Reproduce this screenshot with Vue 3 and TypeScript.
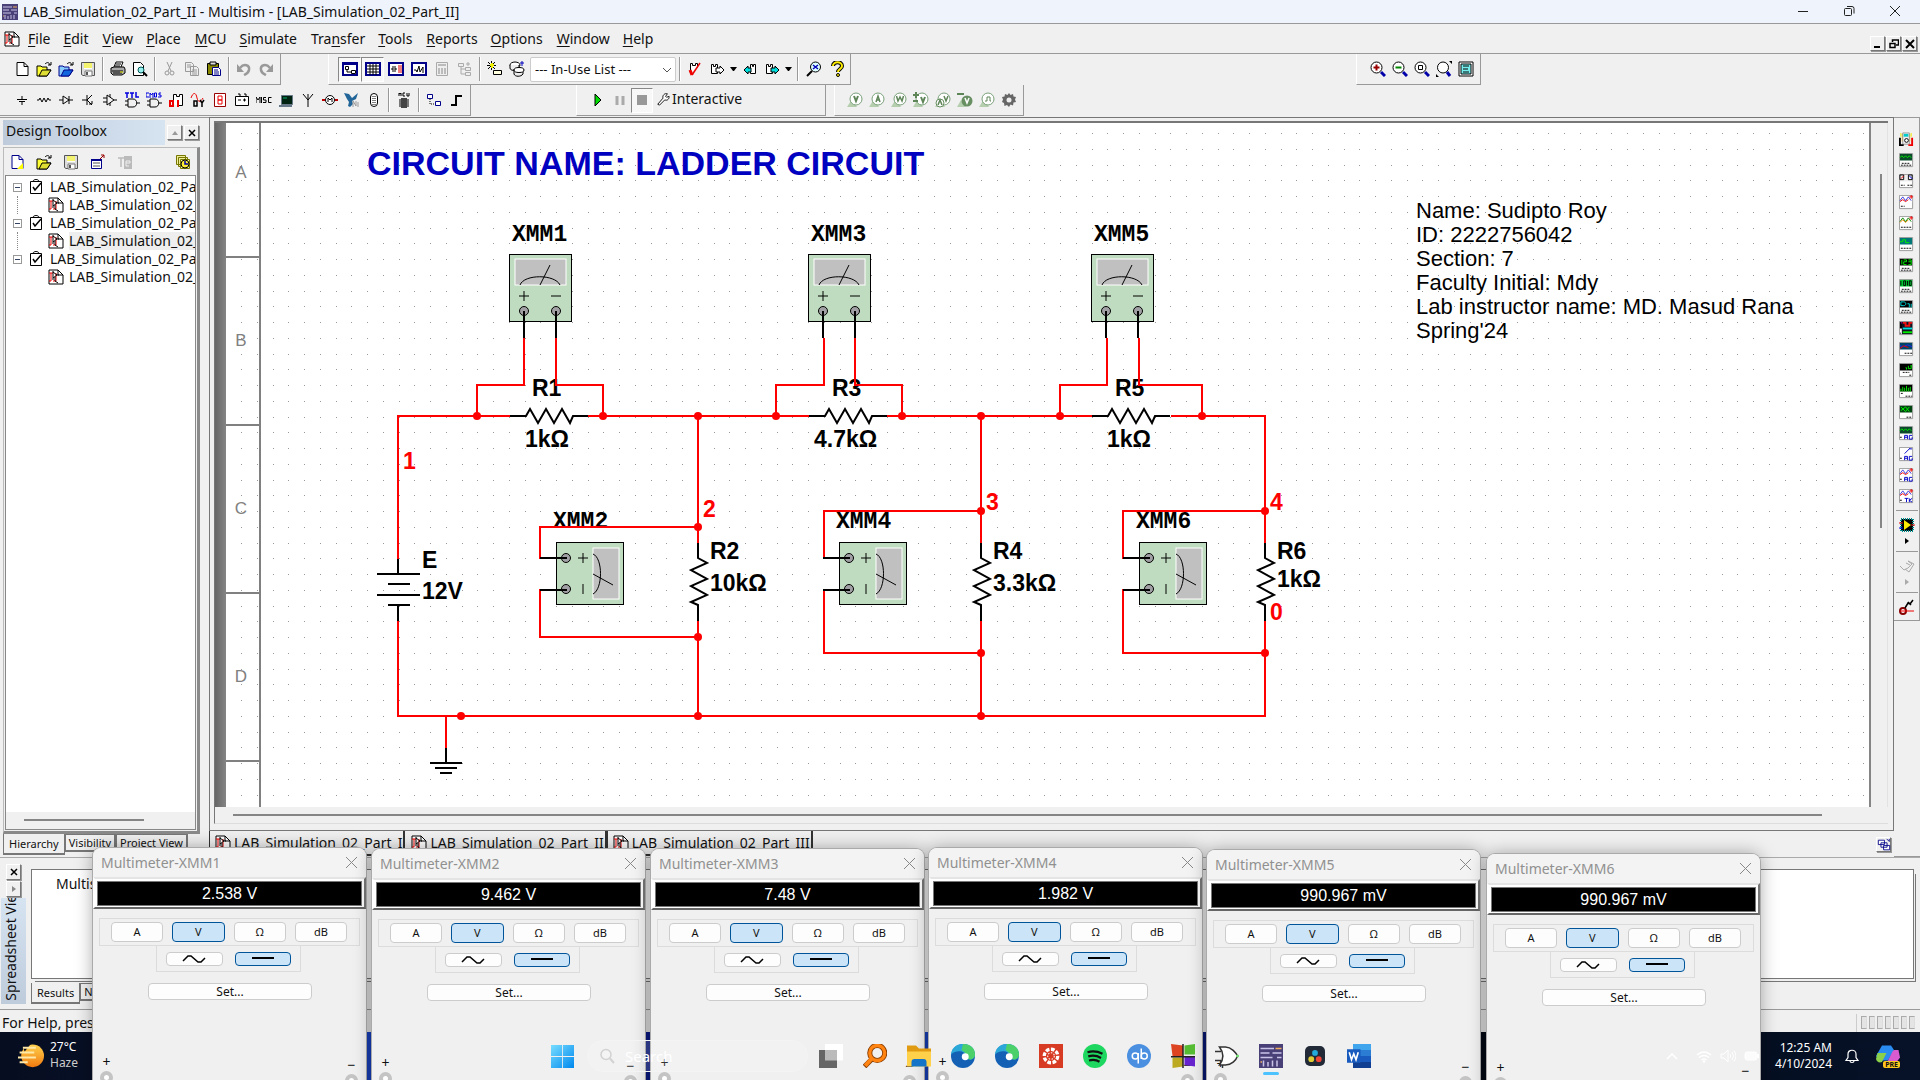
<script setup lang="ts">
import { h, ref } from 'vue'

const icons: Record<string, string> = {
  app: '<rect width="16" height="16" fill="#4a4078"/><path d="M1 3h9M1 6h6M9 6h6M1 9h8M3 15v-4M6 15v-3M9 15v-4M12 15v-4M12 9h3" stroke="#c9c4e6" fill="none"/><path d="M11 3h4M1 12h1" stroke="#f0b060"/>',
  doc: '<path d="M1 1h9l5 5v9H1z" fill="#fff" stroke="#000"/><path d="M10 1v5h5" fill="none" stroke="#000"/><path d="M1 4h4M3 4v8h-2M5 12h3v-8" stroke="#e00" fill="none"/><path d="M5 2v9M5 3l4 3-4 3M9 6h2M7 8v4l3 2" stroke="#000" fill="none"/>',
  page: '<path d="M3 1.500h7l4 4v9H3z" fill="#fff" stroke="#000"/><path d="M10 1.500v4h4" fill="none" stroke="#000"/>',
  newpage: '<path d="M3 1.500h7l4 4v9H3z" fill="#fff" stroke="#008"/><path d="M10 1.500v4h4" fill="none" stroke="#008"/><path d="M14 9v6h-6z" fill="#ff0"/>',
  open: '<path d="M1 5h4l1 1h5v3h4l-4 6H1z" fill="#ff3" stroke="#000"/><path d="M3 15l3-6h9l-4 6z" fill="#dd3" stroke="#000"/><path d="M9 3c2-2 4-2 5 1M15 1v3h-3" fill="none" stroke="#000"/>',
  openblue: '<path d="M1 5h4l1 1h5v3h4l-4 6H1z" fill="#8cf" stroke="#008"/><path d="M3 15l3-6h9l-4 6z" fill="#16d" stroke="#008"/><path d="M9 3c2-2 4-2 5 1M15 1v3h-3" fill="none" stroke="#000"/>',
  save: '<path d="M1.500 1.500h13v13H3l-1.500-1z" fill="#ddd" stroke="#555"/><path d="M4 2h8v6H4z" fill="#fff"/><path d="M4 2h8v5H4z" fill="#ee3" opacity=".7"/><path d="M5 10h7v5H5z" fill="#fff" stroke="#777"/><path d="M6 11h2v3H6z" fill="#555"/>',
  print: '<path d="M4 6l2-5h7l-2 5" fill="#fff" stroke="#000"/><path d="M6 3h5M5 5h5" stroke="#000"/><path d="M1 7l3-1h10l1 2v4l-3 2H3l-2-2z" fill="#aaa" stroke="#000"/><path d="M2 10h11M3 12h9" stroke="#000"/><path d="M10 11h3" stroke="#ee0"/>',
  preview: '<path d="M1.500 1.500h7l3 3v10h-10z" fill="#fff" stroke="#000"/><circle cx="9" cy="9" r="3" fill="#9ee" stroke="#055"/><path d="M11 11l4 4" stroke="#000" stroke-width="2"/>',
  cut: '<path d="M5 1l4 9M10 1L6 10" stroke="#999" fill="none"/><circle cx="5" cy="12" r="2" stroke="#999" fill="none"/><circle cx="10" cy="12" r="2" stroke="#999" fill="none"/>',
  copy: '<path d="M1.500 1.500h6l2 2v7h-8zM6.500 5.500h6l2 2v7h-8z" fill="#eee" stroke="#999"/><path d="M3 4h4M3 6h4M8 9h5M8 11h5M8 13h5" stroke="#999"/>',
  paste: '<path d="M1.500 2.500h11v11h-11z" fill="#880" stroke="#000"/><path d="M4 1h6v3H4z" fill="#ddd" stroke="#000"/><path d="M6.500 6.500h6l2 2v6h-8z" fill="#fff" stroke="#008"/><path d="M8 9h4M8 11h5M8 13h5" stroke="#008"/>',
  undo: '<path d="M4 7c4-5 10-3 9 2-.5 3-3 4-5 5" fill="none" stroke="#999" stroke-width="2.500"/><path d="M1 3v8h7z" fill="#999"/>',
  redo: '<path d="M12 7C8 2 2 4 3 9c.5 3 3 4 5 5" fill="none" stroke="#999" stroke-width="2.500"/><path d="M15 3v8H8z" fill="#999"/>',
  tree: '<path d="M1 2h14v12H1z" fill="#fff" stroke="#008" stroke-width="2"/><path d="M1 3h14" stroke="#008" stroke-width="2"/><path d="M3.500 5.500h3v3h-3zM9.500 9.500h4v3h-4zM5 9v2h4" fill="none" stroke="#000"/>',
  grid: '<path d="M1 2h14v12H1z" fill="#fff" stroke="#008" stroke-width="2"/><path d="M2 5h12M2 8h12M2 11h12M5 3v11M8 3v11M11 3v11" stroke="#000"/>',
  spice: '<path d="M1 2h14v12H1z" fill="#fff" stroke="#008" stroke-width="2"/><path d="M3 8h2M5 5v6M7 5v6M7 8h2" stroke="#000"/><path d="M10 5h4M10 7h4M10 9h4M10 11h4" stroke="#d00"/>',
  graph: '<path d="M1 2h14v12H1z" fill="#fff" stroke="#008" stroke-width="2"/><path d="M3 9h2l1 2 2-6 1 6 3-5v6" fill="none" stroke="#000"/>',
  calc: '<path d="M2.500 1.500h11v13h-11z" fill="#eee" stroke="#aaa"/><path d="M4 4h8M4 8h2M7 8h2M10 8h2M4 10h2M7 10h2M10 10h2M4 12h2M7 12h2M10 12h2" stroke="#aaa" stroke-width="1.500"/>',
  hier: '<path d="M1.500 2.500h5v3h-5zM8.500 6.500h5v3h-5zM8.500 11.500h5v3h-5zM4 6v7h4M4 8h4M9 3h4M11 1v4" fill="#eee" stroke="#aaa"/>',
  newcomp: '<path d="M6.500 9.500h8v4h-8z" fill="#ffd" stroke="#000"/><path d="M1 1l7 7M8 1L1 8M4.500 0v9M0 4.500h9" stroke="#000"/><path d="M3 4h4M5 2v5" stroke="#ee0" stroke-width="2"/>',
  db: '<ellipse cx="6" cy="4" rx="5" ry="3" fill="#fff" stroke="#000"/><path d="M1 4v3c0 3 6 3 9 1V4M5 8v5c1 3 7 3 9 0V8" fill="#eee" stroke="#000"/><ellipse cx="10" cy="9" rx="5" ry="2.500" fill="#fff" stroke="#000"/><path d="M11 2h4M13 0v5" stroke="#00b"/>',
  erc: '<path d="M3.500 12V2.500h2v2h3v-2h2v4" fill="#fff" stroke="#000"/><path d="M3 9l2 5" stroke="#e00" stroke-width="3" fill="none"/><path d="M5 14l8-12" stroke="#e00" stroke-width="1.500"/>',
  xfer: '<path d="M2.500 12.500v-9h2v2h2v-2h2v9z" fill="#fff" stroke="#000"/><path d="M7 7h4V5l4 4-4 4v-2H7z" fill="#fff" stroke="#000"/>',
  back: '<path d="M8.500 12.500v-9h2v2h1v-2h2v9z" fill="#fff" stroke="#000"/><path d="M9 7H6V5L2 9l4 4v-2h3z" fill="#0dd" stroke="#000"/>',
  fwd: '<path d="M2.500 12.500v-9h2v2h2v-2h2v9z" fill="#fff" stroke="#000"/><path d="M7 7h4V5l4 4-4 4v-2H7z" fill="#0dd" stroke="#000"/>',
  find: '<circle cx="9.500" cy="6" r="5" fill="#dff" stroke="#000"/><path d="M6 10l-5 5" stroke="#000" stroke-width="2"/><path d="M7 4l5 4M12 4L7 8" stroke="#00b" stroke-width="1.500"/>',
  help: '<path d="M4 5c0-5 9-5 9 0 0 3-4 3-4 6" stroke="#000" stroke-width="4" fill="none"/><path d="M4 5c0-5 9-5 9 0 0 3-4 3-4 6" stroke="#fe0" stroke-width="2" fill="none"/><circle cx="9" cy="14" r="1.500" fill="#fe0" stroke="#000"/>',
  zin: '<circle cx="6.500" cy="6.500" r="5.500" fill="#fff" stroke="#000"/><path d="M3.500 6.500h6M6.500 3.500v6" stroke="#900" stroke-width="2"/><path d="M11 11l4 4" stroke="#00a" stroke-width="3"/>',
  zout: '<circle cx="6.500" cy="6.500" r="5.500" fill="#fff" stroke="#000"/><path d="M3.500 6.500h6" stroke="#080" stroke-width="2"/><path d="M11 11l4 4" stroke="#00a" stroke-width="3"/>',
  zarea: '<circle cx="6.500" cy="6.500" r="5.500" fill="#fff" stroke="#000"/><path d="M4.500 4.500h4v4h-4z" fill="none" stroke="#000"/><path d="M11 11l4 4" stroke="#00a" stroke-width="3"/>',
  zfit: '<circle cx="7" cy="6.500" r="5.500" fill="#fff" stroke="#000"/><path d="M11 11l3 4" stroke="#00a" stroke-width="3"/><path d="M13 0h3v3zM0 13v3h3z" fill="#000"/>',
  full: '<path d="M1 1h14v14H1z" fill="#fff" stroke="#000"/><path d="M3 3h10v10H3z" fill="#7ee" stroke="#000"/><path d="M5 5h6M5 8h5M5 11h6" stroke="#000"/>',
  src: '<path d="M3 7.500h10M5 9.500h6M8 4v3M8 10v3" stroke="#000"/>',
  res: '<path d="M1 8h2l1-2 2 4 2-4 2 4 2-4 1 2h2" fill="none" stroke="#000"/>',
  diode: '<path d="M1 8h4M11 8h4M5 4v8l6-4zM11 4v8" fill="none" stroke="#000"/>',
  trans: '<path d="M2 8h5M7 3v10M12 3L7 8l5 5M9 12h3v-3" fill="none" stroke="#000"/>',
  opamp: '<path d="M5 3v10l7-5zM1 6h4M1 10h4M12 8h3M8 2v3M8 11v3" fill="none" stroke="#000"/>',
  ttl: '<path d="M4 7h5c5 0 5 8 0 8H4zM1 9h3M1 13h3M13 11h3" fill="none" stroke="#000"/><path d="M1 1h4M3 1v5M6 1h4M8 1v5M12 0v5h3" stroke="#00d" stroke-width="1.500" fill="none"/>',
  cmos: '<path d="M4 7h5c5 0 5 8 0 8H4zM1 9h3M1 13h3M13 11h3" fill="none" stroke="#000"/><path d="M3 1H0v4h3M4 6V1l1.500 2L7 1v5M8.500 1h2v4h-2zM15 1h-2v2h2v2h-3" stroke="#00d" fill="none"/>',
  digi: '<path d="M5.500 12V2.500h3v2h3v-2h3v11H9" fill="#fff" stroke="#000"/><path d="M2 9h3v5H2zM10 8v7" fill="none" stroke="#e00" stroke-width="2"/>',
  mixed: '<path d="M1 6c2-6 5-6 6 0 1 4 3 5 6 0" fill="none" stroke="#e00"/><path d="M4 9h3v5H4zM10 8l2 3 2-3M12 11v4" fill="none" stroke="#000" stroke-width="1.500"/>',
  indi: '<path d="M2.500 1.500h11v13h-11z" fill="#fff" stroke="#900"/><path d="M6 4h4v4H6zM6 8h4v4H6z" fill="none" stroke="#e00"/>',
  power: '<path d="M1.500 4.500h13v9h-13z" fill="#fff" stroke="#000"/><path d="M4 2h2v2M10 2h2v2M4 8h3M9 8h3M10.500 6.500v3" fill="none" stroke="#000"/>',
  misc: '<path d="M0 11V5l2 3 2-3v6M5.500 5v6M10 5.500H7.500v2.500H10v2.500H7M15.500 5.500h-3v5h3" fill="none" stroke="#000"/>',
  adv: '<path d="M3.500 3.500h11v9h-11z" fill="#021" stroke="#678"/><path d="M1 13h13v2H1z" fill="#678"/><path d="M5 6h4" stroke="#0a6"/>',
  rf: '<path d="M8 15V8M8 8L3 2M8 8l5-6M8 8V2" fill="none" stroke="#000"/>',
  motor: '<circle cx="8" cy="8" r="4.500" fill="#fff" stroke="#000"/><path d="M6 10V6l2 2 2-2v4" fill="none" stroke="#000"/><path d="M0 8h3M13 8h3" stroke="#b00" stroke-width="2"/>',
  ni: '<path d="M0 1l5 1 3 4 6-5-2 6-4 2 1 3-3 3-2-1 1-4-2-3z" fill="#269"/><path d="M9 15V9l3 5V9M14 10v5" stroke="#999" fill="none"/>',
  conn: '<rect x="4.500" y="1.500" width="7" height="13" rx="3.500" fill="#fff" stroke="#000"/><path d="M7 4v9M9 4v9" stroke="#000" stroke-dasharray="1 1"/>',
  mcu: '<path d="M3 4V1l1 1 1-1v3M9 1H7v3h2M11 1v3h2V1" fill="none" stroke="#000"/><path d="M5 6h6v10H5z" fill="#444"/><path d="M3 8h10M3 10h10M3 12h10M3 14h10" stroke="#000" stroke-dasharray="2 6"/>',
  hb: '<path d="M1.500 2.500h5v4h-5zM9.500 9.500h5v4h-5z" fill="#fff" stroke="#008"/><path d="M4 7v5h5" fill="none" stroke="#000" stroke-dasharray="1 1"/>',
  bus: '<path d="M3 13h5V4h6" fill="none" stroke="#000" stroke-width="2"/>',
  wrench: '<path d="M2 14l6-7c-1-3 2-6 5-5l-2 3 1 1 3-1c0 4-3 5-5 4l-6 6z" fill="#fff" stroke="#000"/>',
  gear: '<path d="M8 1l1.500 2L12 2l.5 2.500L15 5l-1 2.500 1 2.500-2.500.5-.5 3-2.500-1L8 15l-2-2-2.500 1-.5-3L1 10l1-2.500L1 5l2.500-.5L4 2l2.500 1z" fill="#666"/><circle cx="8" cy="8" r="2.500" fill="#eee"/>',
  close: '<path d="M4 4l8 8M12 4l-8 8" stroke="#000" stroke-width="2"/>',
  rename: '<path d="M1.500 5.500h10v9h-10z" fill="#fff" stroke="#008"/><path d="M1 6h11" stroke="#008" stroke-width="2"/><path d="M3 9h7M3 12h7" stroke="#555"/><path d="M10 5l4-4M11 1h3v3" stroke="#900" fill="none"/>',
  tedit: '<path d="M1 4h6M4 4v9" stroke="#bbb" stroke-width="1.500"/><path d="M7 2h8v13H7z" fill="#bbb"/><path d="M9 9h4M12 12H9V7h4v2" stroke="#eee" fill="none"/>',
  recent: '<path d="M1.500 1.500h9v9h-9zM3.500 3.500h9v9h-9z" fill="#ee9" stroke="#770"/><path d="M5.500 5.500h9v9h-9z" fill="#ff9" stroke="#770"/><circle cx="10" cy="10" r="4" fill="#fe3" stroke="#000"/><path d="M10 7v3h3" stroke="#00a" fill="none" stroke-width="1.500"/>',
  check: '<path d="M2.500 2.500h11v12h-11z" fill="#fff" stroke="#000"/><path d="M5 2c1-2 5-2 6 0" stroke="#000" fill="#fff"/><path d="M5 8l2 3 6-7" stroke="#000" stroke-width="1.500" fill="none"/>',
  cascade: '<path d="M1.500 2.500h7v5h-7zM4.500 5.500h7v5h-7zM7.500 8.500h7v5h-7z" fill="#fff" stroke="#008"/><path d="M11 1l3 3M14 1v3" stroke="#008"/>',
  probeSet: '<path d="M3 2h9v8H3z" fill="#fc0"/><path d="M4 1h7v12H4z" fill="#eee" stroke="#999"/><path d="M5 2h5v3H5z" fill="#0cc"/><circle cx="8" cy="9" r="2" fill="#fff" stroke="#000"/><path d="M1 6v8h4" stroke="#000" stroke-width="2" fill="none"/><path d="M14 6v8h-4" stroke="#e00" stroke-width="2" fill="none"/><path d="M2 1v4M13 1v4" stroke="#ee0"/>',
  labview: '<path d="M2 2h12v12H2z" fill="#000" stroke="#088" stroke-dasharray="1 1" stroke-width="2"/><path d="M5 3v10l7-5z" fill="#fe0"/><path d="M0 6h4" stroke="#e00"/><path d="M0 11h4" stroke="#00e"/><path d="M12 8h4" stroke="#e00"/>',
  elvis: '<path d="M1 8l4 4 4-2 4-4-4-3 6 3-5 8-4-3M7 5l4 2" fill="none" stroke="#aaa"/>',
  current: '<circle cx="4" cy="12" r="3" fill="#fff" stroke="#800" stroke-width="2"/><path d="M1 12h14" stroke="#e00"/><path d="M6 9l3-5 2 1 3-4M9 3l3 3" stroke="#000" stroke-width="1.500" fill="none"/>',
}

function probe(inner: string) {
  return '<path d="M0 15l5-8 5 8z" fill="#b5cfae"/><circle cx="9" cy="7" r="6" fill="#fff" stroke="#79a079"/>' + inner
}
icons.p1 = probe('<path d="M7 4l2 5 2-5" fill="none" stroke="#5e8558" stroke-width="2"/>')
icons.p2 = probe('<path d="M7 10l2-6 2 6M7 8h4" fill="none" stroke="#5e8558" stroke-width="1.500"/>')
icons.p3 = probe('<path d="M5.500 4l1.500 5 2-4 2 4 1.500-5" fill="none" stroke="#5e8558" stroke-width="1.500"/>')
icons.p4 = probe('<path d="M8 5l2 5 2-5M0 3h6M3 0v6M0 9h5" fill="none" stroke="#5e8558" stroke-width="2"/>')
icons.p5 = probe('<circle cx="5" cy="11" r="4" fill="#fff" stroke="#688f62"/><path d="M3 13l2-5 2 5M9 4l2 5 2-5" fill="none" stroke="#5e8558" stroke-width="1.500"/>')
icons.p6 = '<path d="M0 15l4-7 5 7z" fill="#b5cfae"/><circle cx="10" cy="9" r="5.500" fill="#688f62"/><path d="M0 2h7" stroke="#5e8558" stroke-width="2"/><path d="M8 6l2 5 2-5" fill="none" stroke="#fff" stroke-width="1.500"/>'
icons.p7 = probe('<path d="M6 9h2V5h3v4h1" fill="none" stroke="#5e8558"/>')

function bench(screen: string, trace: string, color: string, foot: string) {
  return `<path d="M0.500 0.500h14v14h-14z" fill="#fff" stroke="#999"/><path d="M1 1h13v7H1z" fill="${screen}"/><path d="${trace}" fill="none" stroke="${color}"/><path d="${foot}" stroke="#000" stroke-dasharray="2 1" fill="none"/>`
}
const footer = 'M3 11h9M2 13h11'
const ag = 'M1 12h3'
const agText = '<path d="M6 14v-4h3v4M6 12h3M14 10h-3v4h3v-2" fill="none" stroke="#00c"/>'
const zigzag = 'M1 6l3-4 3 4 3-4 3 4'
const redWave = '<path d="M1 7l3-2 3 2 3-2M11 2h4M13 0v4" stroke="#e00" fill="none"/>'
icons.i1 = bench('#0a4a2a', 'M1 5l2-2 2 2 2-2 2 2 2-2 2 2', '#0e0', footer)
icons.i2 = bench('#eee', 'M1 1h4v5H1zM10 1h4v5h-4z', '#000', 'M2 12h4M9 12h5') + '<path d="M2 5l3-3" stroke="#e00"/><path d="M11 2l3 3" stroke="#00e"/>'
icons.i3 = bench('#fff', zigzag, '#33d', 'M2 12h4') + redWave
icons.i4 = bench('#fff', zigzag, '#080', 'M2 12h11') + '<path d="M1 7l3-3 3 3 3-3" stroke="#e80" fill="none"/><path d="M11 2h4M13 0v4" stroke="#e00"/>'
icons.i5 = bench('#077', 'M1 5h3V3h3v3h4', '#0e0', 'M2 12h11')
icons.i6 = bench('#000', 'M3 2v5M5 2h3v2H5v3h3M10 2h3v5h-3M10 4h3', '#0e0', footer)
icons.i7 = bench('#0c3', 'M2 2v5M5 2h2v5H5zM9 2v5M11 2h2v5h-2z', '#000', footer)
icons.i8 = bench('#000', 'M2 2h3c3 0 3 4 0 4H2zM9 4h2v4M13 4v4', '#0dd', footer)
icons.i9 = bench('#000', 'M2 2h4v3h4V2h4', '#e0e', 'M1 13h1') + '<path d="M3 1h11v13H3z" fill="#112"/><path d="M4 8h10" stroke="#0dd" stroke-width="2"/><path d="M4 2h3v3h4V2h3" stroke="#e11" stroke-width="2" fill="none"/><path d="M4 12h10" stroke="#0e0" stroke-width="2"/>'
icons.i10 = bench('#046', 'M1 4l4 1 4-2 5 2', '#22e', 'M6 12h8') + '<path d="M1 7l4-3 5 2" stroke="#e00" fill="none"/>'
icons.i11 = bench('#000', 'M7 5h1v2M10 3v3h3V3M12 3h2', '#0e0', 'M4 10h7M11 13h3')
icons.i12 = bench('#000', 'M2 8V5M4 8V3M6 8V4M8 8V2M10 8V4M12 8V3', '#0e0', 'M2 10h2M7 13h7')
icons.i13 = bench('#041', 'M2 2l5 5 4-5M2 6l5-4 4 5', '#0e0', 'M8 13h6')
icons.i14 = bench('#0a4a2a', 'M1 5l2-2 2 2 2-2 2 2 2-2 2 2', '#0e0', ag) + agText
icons.i15 = bench('#fff', 'M6 7l6-6M11 2h3', '#00c', ag) + agText
icons.i16 = bench('#fff', zigzag, '#33d', ag) + redWave + agText
icons.i17 = bench('#fff', zigzag, '#33d', ag) + redWave + '<path d="M6 10h4M8 10v4M11 10v4M14 10l-3 2 3 2" fill="none" stroke="#00c"/>'

Object.assign(icons, {
  start: '<defs><linearGradient id="win" x2="1" y2="1"><stop stop-color="#7df"/><stop offset="1" stop-color="#08e"/></linearGradient></defs><path d="M0 0h7.700v7.700H0zM8.300 0H16v7.700H8.300zM0 8.300h7.700V16H0zM8.300 8.300H16V16H8.300z" fill="url(#win)"/>',
  tview: '<path d="M4 0h12v11H4z" fill="#fff"/><path d="M0 4h12v12H0z" fill="#666"/><path d="M4 4h8v7H4z" fill="#bbb"/>',
  everything: '<circle cx="9.500" cy="6" r="5" fill="none" stroke="#8a3d00" stroke-width="3.400"/><path d="M6 10l-5 5" stroke="#8a3d00" stroke-width="3.400"/><circle cx="9.500" cy="6" r="5" fill="none" stroke="#ff8412" stroke-width="2.200"/><path d="M6 9.500l-4.500 5" stroke="#ff8412" stroke-width="2.600"/>',
  folder: '<path d="M0 1h6l2 2h8v5H0z" fill="#e09b12"/><path d="M0 5h16v10H0z" fill="#ffd04a"/><path d="M3 15v-3q0-2 2-2h6q2 0 2 2v3z" fill="#1374c8"/>',
  edge: '<circle cx="8" cy="8" r="8" fill="#1460b4"/><path d="M0 7C1-3 16-2 16 7c0 4-5 4-6 2 1-4-6-6-10-2z" fill="#2ba8d8"/><path d="M8 0c5 0 8 3 8 7s-5 4-6 2c1-3-2-4-3-5z" fill="#4cd06a"/><circle cx="9.500" cy="8.500" r="2.300" fill="#fff"/>',
  canvas: '<path d="M0 0h16v16H0z" fill="#d83b24"/><circle cx="8" cy="8" r="4.500" fill="none" stroke="#fff" stroke-width="2.200" stroke-dasharray="2.500 1"/><circle cx="8" cy="8" r="2.200" fill="none" stroke="#fff" stroke-width=".7" stroke-dasharray="1 1"/>',
  spotify: '<circle cx="8" cy="8" r="8" fill="#1ed760"/><path d="M3 5.500q5-1.500 10 1M3.500 8.300q4.500-1.300 8.500 1M4 11q4-1 7 .800" stroke="#111" stroke-width="1.500" fill="none"/>',
  qb: '<circle cx="8" cy="8" r="8" fill="#4b8fe0"/><circle cx="5.500" cy="8" r="2" fill="none" stroke="#fff"/><path d="M7.500 6v7M9.500 3v7" stroke="#fff"/><circle cx="11.500" cy="8" r="2" fill="none" stroke="#fff"/>',
  gems: '<path d="M0 0l8 1v7H1z" fill="#d42"/><path d="M9 1l7-1v7H9z" fill="#5b3"/><path d="M1 9h7v6l-7 1z" fill="#ba2"/><path d="M9 8h7v7l-7-1z" fill="#62c"/><path d="M8 0v16M0 8.500h16" stroke="#222"/>',
  gate: '<path d="M3 2h4c4 0 7 4 8 6-1 3-4 6-8 6H3c3-4 3-8 0-12z" fill="#fff" stroke="#333"/><path d="M0 5h4M0 11h4M5 14v2" stroke="#333"/><path d="M14 8h3" stroke="#7d7" stroke-width="1.500"/>',
  resolve: '<rect width="16" height="16" rx="4" fill="#222a38"/><circle cx="8" cy="5.500" r="2.300" fill="#2ad"/><circle cx="5" cy="10.500" r="2.300" fill="#dc3"/><circle cx="11" cy="10.500" r="2.300" fill="#e43"/>',
  word: '<path d="M4 0h12v16H4z" fill="#41a5ee"/><path d="M4 4h12v4H4z" fill="#2b7cd3"/><path d="M4 8h12v4H4z" fill="#185abd"/><path d="M4 12h12v4H4z" fill="#103f91"/><path d="M0 3.500h9v9H0z" fill="#185abd"/><path d="M1.500 5.500l1.500 5 1.500-4 1.500 4 1.500-5" stroke="#fff" fill="none" stroke-width="1.100"/>',
  haze: '<defs><linearGradient id="hz" x2="0" y2="1"><stop stop-color="#ffd24d"/><stop offset="1" stop-color="#f07a10"/></linearGradient></defs><circle cx="9" cy="8.500" r="7" fill="url(#hz)"/><path d="M3 1h5L4 6z" fill="#060d20"/><path d="M3 3.500h8M1 6.500h9M0 9.500h11M1 12.500h5" stroke="#ffe9a8" stroke-width="1.300"/>',
  copilot: '<path d="M4 1h6l2 3-4 7H2L0 8z" fill="#2a8cf0"/><path d="M1 6l-1 4q1 3 4 2l3-6z" fill="#8ad04a"/><path d="M12 4h3l1 5-3 4H7l4-8z" fill="#d95bd0"/>',
  chevron: '<path d="M3 11l5-5 5 5" fill="none" stroke="#fff" stroke-width="1.500"/>',
  wifi: '<path d="M1 7q7-6 14 0M3 9.500q5-4 10 0M5.500 12q2.500-2 5 0" fill="none" stroke="#fff" stroke-width="1.500"/><circle cx="8" cy="13.500" r="1.200" fill="#fff"/>',
  volume: '<path d="M1 6h3l4-4v12l-4-4H1z" fill="none" stroke="#fff"/><path d="M10 6q1.500 2 0 4M12 4q3 4 0 8M14 2.500q4 5.500 0 11" fill="none" stroke="#fff"/>',
  battery: '<rect x="1" y="4" width="12" height="8" rx="2" fill="#fff" fill-opacity=".8" stroke="#fff"/><path d="M14 6v4" stroke="#fff" stroke-width="2"/>',
  bell: '<path d="M2 12.500h12l-2-3V6c0-5-8-5-8 0v3.500zM6 13c0 2 4 2 4 0" fill="none" stroke="#fff" stroke-width="1.200"/>',
  search: '<circle cx="7" cy="6.500" r="5" fill="#f4f4f4" stroke="#d2d2d2" stroke-width="1.500"/><path d="M11 10.500l4 4.500" stroke="#d2d2d2" stroke-width="2"/>',
})

const Icon = (props: { name: string; size?: number }) =>
  h('svg', {
    viewBox: '0 0 16 16',
    width: props.size ?? 16,
    height: props.size ?? 16,
    'aria-hidden': 'true',
    innerHTML: icons[props.name],
  })
Icon.props = ['name', 'size']

const menus = ['_File', '_Edit', '_View', '_Place', '_MCU', '_Simulate', 'Tra_nsfer', '_Tools', '_Reports', '_Options', '_Window', '_Help'].map((m) => {
  const i = m.indexOf('_')
  return { pre: m.slice(0, i), key: m[i + 1], post: m.slice(i + 2) }
})

const fileTools = ['page', 'open', 'openblue', 'save', '|', 'print', 'preview', '|', 'cut', 'copy', 'paste', '|', 'undo', 'redo']
const viewTools = ['tree', 'grid', 'spice', 'graph', 'calc', 'hier']
const zoomTools = ['zin', 'zout', 'zarea', 'zfit', 'full']
const partTools = ['src', 'res', 'diode', 'trans', 'opamp', 'ttl', 'cmos', 'digi', 'mixed', 'indi', 'power', 'misc', 'adv', 'rf', 'motor', 'ni', 'conn', '|', 'mcu', '|', 'hb', 'bus']
const probeTools = ['p1', 'p2', 'p3', 'p4', 'p5', 'p6', 'p7', 'gear']
const instruments = ['probeSet', ...Array.from({ length: 17 }, (_, i) => `i${i + 1}`)]
const inUse = ref('list')

const designs = ['I', 'II', 'III']
const rulerRows = ['A', 'B', 'C', 'D']

/* Grid dots across the sheet, counted from its top left corner. */
const pitch = 15.75
let dots = ''
for (let r = 0; r < 60; r++) {
  for (let c = 0; c < 140; c++) {
    dots += `M${Math.round(15 + c * pitch)} ${Math.round(10 + r * pitch)}h1v1h-1z`
  }
}

const wires = [
  'M398 559V416H510M588 416H809M887 416H1092M1171 416H1265V543',
  'M398 621V716H1265V621',
  'M524 338V385H477V416M556 338V385H603V416',
  'M824 338V385H776V416M855 338V385H902V416',
  'M1107 338V385H1060V416M1139 338V385H1202V416',
  'M698 416V543M698 621V716M981 416V543M981 621V716',
  'M698 527H540V559M540 589V637H698',
  'M981 511H824V559M824 589V653H981',
  'M1265 511H1123V559M1123 589V653H1265',
  'M446 716V748',
].join('')
const junctions = [
  [477, 416], [603, 416], [698, 416], [776, 416], [902, 416], [981, 416], [1060, 416], [1202, 416],
  [698, 527], [698, 637], [981, 511], [981, 653], [1265, 511], [1265, 653], [461, 716], [698, 716], [981, 716],
]
const horizontalResistors = [510, 809, 1092]
const verticalResistors = [698, 981, 1265]
const topMeters = [
  { x: 509, name: 'XMM1' },
  { x: 808, name: 'XMM3' },
  { x: 1091, name: 'XMM5' },
]
const sideMeters = [
  { x: 556, name: 'XMM2' },
  { x: 839, name: 'XMM4' },
  { x: 1139, name: 'XMM6' },
]
const labels = [
  { x: 532, y: 396, t: 'R1' }, { x: 525, y: 447, t: '1kΩ' },
  { x: 832, y: 396, t: 'R3' }, { x: 814, y: 447, t: '4.7kΩ' },
  { x: 1115, y: 396, t: 'R5' }, { x: 1107, y: 447, t: '1kΩ' },
  { x: 710, y: 559, t: 'R2' }, { x: 710, y: 591, t: '10kΩ' },
  { x: 993, y: 559, t: 'R4' }, { x: 993, y: 591, t: '3.3kΩ' },
  { x: 1277, y: 559, t: 'R6' }, { x: 1277, y: 587, t: '1kΩ' },
  { x: 422, y: 568, t: 'E' }, { x: 422, y: 599, t: '12V' },
]
const nets = [
  { x: 403, y: 469, t: '1' }, { x: 703, y: 517, t: '2' }, { x: 986, y: 510, t: '3' },
  { x: 1270, y: 510, t: '4' }, { x: 1270, y: 620, t: '0' },
]
const notes = ['Name: Sudipto Roy', 'ID: 2222756042', 'Section: 7', 'Faculty Initial: Mdy', 'Lab instructor name: MD. Masud Rana', "Spring'24"]

const meters = [
  { name: 'XMM1', value: '2.538 V', x: 93, y: 848 },
  { name: 'XMM2', value: '9.462 V', x: 372, y: 849 },
  { name: 'XMM3', value: '7.48 V', x: 651, y: 849 },
  { name: 'XMM4', value: '1.982 V', x: 929, y: 848 },
  { name: 'XMM5', value: '990.967 mV', x: 1207, y: 850 },
  { name: 'XMM6', value: '990.967 mV', x: 1487, y: 854 },
]
const modes = ['A', 'V', 'Ω', 'dB']
const apps = ['tview', 'everything', 'folder', 'edge', 'edge', 'canvas', 'spotify', 'qb', 'gems', 'gate', 'app', 'resolve', 'word']
</script>

<template>
  <div class="desktop">
    <header class="titlebar">
      <Icon name="app" />
      <span class="title">LAB_Simulation_02_Part_II - Multisim - [LAB_Simulation_02_Part_II]</span>
      <div class="caption">
        <button aria-label="Minimize"><svg width="12" height="12"><path d="M1 6.500h10" stroke="#222" /></svg></button>
        <button aria-label="Restore">
          <svg width="12" height="12" fill="none" stroke="#222"><rect x="1.500" y="3.500" width="7" height="7" rx="1" /><path d="M4 1.500h5q2 0 2 2v5" /></svg>
        </button>
        <button aria-label="Close"><svg width="12" height="12"><path d="M1 1l10 10M11 1L1 11" stroke="#222" /></svg></button>
      </div>
    </header>

    <nav class="menubar">
      <Icon name="doc" />
      <button v-for="m in menus" :key="m.key + m.post">{{ m.pre }}<u>{{ m.key }}</u>{{ m.post }}</button>
      <div class="mdi">
        <button class="bevel" aria-label="Minimize document"><svg width="10" height="10"><path d="M1 8h6" stroke="#000" stroke-width="2" /></svg></button>
        <button class="bevel" aria-label="Restore document"><svg width="10" height="10" fill="none" stroke="#000"><path d="M3.500 3V1h6v5H7M1 4.500h5v4H1z" stroke-width="1.500" /></svg></button>
        <button class="bevel" aria-label="Close document"><svg width="10" height="10"><path d="M1 1l8 8M9 1L1 9" stroke="#000" stroke-width="2" /></svg></button>
      </div>
    </nav>

    <div class="toolrow">
      <div class="bar">
        <template v-for="(t, i) in fileTools" :key="i">
          <i v-if="t === '|'" class="sep"></i>
          <button v-else class="tool" :aria-label="t"><Icon :name="t" /></button>
        </template>
      </div>
      <div class="bar view">
        <button v-for="(t, i) in viewTools" :key="t" class="tool wide" :class="{ on: i < 2 }" :aria-label="t"><Icon :name="t" /></button>
        <i class="sep"></i>
        <button class="tool" aria-label="New component"><Icon name="newcomp" /></button>
        <button class="tool" aria-label="Database"><Icon name="db" /></button>
        <span class="combo">
          <select v-model="inUse" aria-label="In-use list"><option value="list">--- In-Use List ---</option></select>
          <svg width="10" height="6"><path d="M1 1l4 4 4-4" fill="none" stroke="#555" /></svg>
        </span>
        <i class="sep"></i>
        <button class="tool" aria-label="Rules check"><Icon name="erc" /></button>
        <button class="tool" aria-label="Transfer"><Icon name="xfer" /></button>
        <span class="drop"></span>
        <button class="tool" aria-label="Back annotate"><Icon name="back" /></button>
        <button class="tool" aria-label="Forward annotate"><Icon name="fwd" /></button>
        <span class="drop"></span>
        <i class="sep"></i>
        <button class="tool wide" aria-label="Find"><Icon name="find" /></button>
        <button class="tool wide" aria-label="Help"><Icon name="help" /></button>
      </div>
      <div class="bar zoom">
        <button v-for="t in zoomTools" :key="t" class="tool" :aria-label="t"><Icon :name="t" /></button>
      </div>
    </div>

    <div class="toolrow">
      <div class="bar">
        <template v-for="(t, i) in partTools" :key="i">
          <i v-if="t === '|'" class="sep"></i>
          <button v-else class="tool" :aria-label="t"><Icon :name="t" /></button>
        </template>
      </div>
      <div class="bar sim">
        <button class="tool" aria-label="Run"><svg width="12" height="14"><path d="M3 1v12l6-6z" fill="#0d0" stroke="#000" /></svg></button>
        <button class="tool" aria-label="Pause"><svg width="12" height="12"><path d="M3 2v9M9 2v9" stroke="#aaa" stroke-width="3" /></svg></button>
        <button class="tool on" aria-label="Stop"><svg width="10" height="10"><rect width="10" height="10" fill="#999" /></svg></button>
        <button class="interactive"><Icon name="wrench" :size="14" />Interactive</button>
      </div>
      <div class="bar probes">
        <button v-for="t in probeTools" :key="t" class="tool" :aria-label="t"><Icon :name="t" /></button>
      </div>
    </div>

    <main class="work">
      <aside class="toolbox">
        <div class="panelhead">
          <h2>Design Toolbox</h2>
          <button class="bevel" aria-label="Collapse"><svg width="6" height="4"><path d="M0 4h6L3 0z" fill="#999" /></svg></button>
          <button class="bevel" aria-label="Close toolbox"><Icon name="close" :size="12" /></button>
        </div>
        <div class="box">
          <div class="boxtools">
            <Icon name="newpage" /><Icon name="open" /><Icon name="save" /><Icon name="rename" /><Icon name="tedit" /><Icon class="far" name="recent" />
          </div>
          <div class="tree">
            <ul>
              <li v-for="d in designs" :key="d">
                <div class="node"><span class="minus"></span><Icon name="check" />LAB_Simulation_02_Part_{{ d }}</div>
                <div class="leaf"><Icon name="doc" /><span :class="{ sel: d === 'II' }">LAB_Simulation_02_Part_{{ d }}</span></div>
              </li>
            </ul>
            <div class="hscroll"><span></span></div>
          </div>
        </div>
        <div class="tabs small">
          <button class="current">Hierarchy</button><button>Visibility</button><button>Project View</button>
        </div>
      </aside>

      <section class="doc">
        <div class="frame">
          <div class="sheetrow">
            <div class="edge"></div>
            <svg class="sheet" role="img" aria-label="Ladder circuit schematic">
              <path :d="dots" fill="#9a9a9a" shape-rendering="crispEdges" />
              <g transform="translate(-226 -123)">
                <path d="M260 122v700M226 257h34M226 425h34M226 593h34M226 761h34" stroke="#808080" stroke-width="2" />
                <text v-for="(r, i) in rulerRows" :key="r" class="ruler" x="241" :y="178 + i * 168">{{ r }}</text>
                <text class="heading" x="367" y="175">CIRCUIT NAME: LADDER CIRCUIT</text>
                <text v-for="(n, i) in notes" :key="n" class="note" x="1416" :y="218 + i * 24">{{ n }}</text>
                <text v-for="l in labels" :key="l.t + l.x + l.y" class="label" :x="l.x" :y="l.y">{{ l.t }}</text>
                <text v-for="m in topMeters" :key="m.name" class="meter" :x="m.x + 3" y="241">{{ m.name }}</text>
                <text v-for="m in sideMeters" :key="m.name" class="meter" :x="m.x - 3" y="528">{{ m.name }}</text>

                <path :d="wires" fill="none" stroke="#f00" stroke-width="2" shape-rendering="crispEdges" />
                <circle v-for="j in junctions" :key="j.join()" :cx="j[0]" :cy="j[1]" r="4" fill="#f00" />
                <text v-for="n in nets" :key="n.t" class="net" :x="n.x" :y="n.y">{{ n.t }}</text>

                <g fill="none" stroke="#000" stroke-width="2">
                  <path v-for="x in horizontalResistors" :key="x" :transform="`translate(${x} 416)`" d="M0 0h16l4-7 8 14 8-14 8 14 8-14 8 14 3-7h15" />
                  <path v-for="x in verticalResistors" :key="x" :transform="`translate(${x} 543)`" d="M0 0v15l9 5-16 7 16 9-16 7 16 9-16 7 7 3v16" />
                  <path d="M398 559v15M377 574h43M388 584h22M377 595h43M388 605h22M398 605v16" />
                  <path d="M446 748v14M430 763h32M435 768h22M440 773h12" />
                </g>

                <g v-for="m in topMeters" :key="m.name" :transform="`translate(${m.x} 254)`" fill="none" stroke="#000">
                  <rect x="0.500" y="0.500" width="62" height="67" fill="#c0dcc0" />
                  <rect x="6" y="5" width="51" height="26" fill="#c0c0c0" stroke="#fff" />
                  <path d="M11 31C15 20 46 20 51 31M31 31l10-20M10 42h10M15 37v10M42 42h10" />
                  <circle cx="15" cy="57" r="4.500" fill="#a0a0a4" /><circle cx="47" cy="57" r="4.500" fill="#a0a0a4" />
                  <path d="M15 57v27M47 57v27" stroke-width="2" />
                </g>
                <g v-for="m in sideMeters" :key="m.name" :transform="`translate(${m.x} 542)`" fill="none" stroke="#000">
                  <rect x="0.500" y="0.500" width="67" height="62" fill="#c0dcc0" />
                  <rect x="37" y="6" width="26" height="51" fill="#c0c0c0" stroke="#fff" />
                  <path d="M37 12C47 16 47 47 37 52M37 32l20 11M22 16h10M27 11v10M27 42v10" />
                  <circle cx="10" cy="16" r="4.500" fill="#a0a0a4" /><circle cx="10" cy="47" r="4.500" fill="#a0a0a4" />
                  <path d="M-16 16h27M-16 48h27" stroke-width="2" />
                </g>
              </g>
            </svg>
            <div class="vscroll"><span></span></div>
          </div>
          <div class="hscroll wide"><span></span></div>
        </div>
        <div class="tabs docs">
          <button v-for="d in designs" :key="d" :class="{ current: d === 'II' }"><Icon name="doc" />LAB_Simulation_02_Part_{{ d }}</button>
          <button class="bevel cascade" aria-label="Tab list"><Icon name="cascade" :size="14" /></button>
        </div>
      </section>

      <aside class="instruments">
        <div class="rack">
          <div class="list">
            <button v-for="t in instruments" :key="t" :aria-label="t"><Icon :name="t" :size="15" /></button>
          </div>
          <hr />
          <button class="single" aria-label="LabVIEW"><Icon name="labview" /></button>
          <svg class="tri" width="4" height="6"><path d="M0 0v6l4-3z" /></svg>
          <hr />
          <button class="single" aria-label="ELVIS"><Icon name="elvis" /></button>
          <svg class="tri" width="4" height="6"><path d="M0 0v6l4-3z" fill="#aaa" /></svg>
          <hr />
          <button class="single" aria-label="Current clamp"><Icon name="current" /></button>
        </div>
      </aside>
    </main>

    <section class="spread">
      <div class="side">
        <button class="bevel" aria-label="Close spreadsheet"><Icon name="close" :size="12" /></button>
        <button class="bevel" aria-label="Expand"><svg width="4" height="6"><path d="M0 0v6l4-3z" fill="#888" /></svg></button>
        <h2><span>Spreadsheet View</span></h2>
      </div>
      <div class="sheetpane">
        <div class="results">Multisim</div>
        <div class="tabs small"><button class="current">Results</button><button>Nets</button></div>
      </div>
    </section>

    <footer class="status">
      <span>For Help, press F1</span>
      <div class="cells"><i v-for="n in 7" :key="n"></i></div>
    </footer>

    <section v-for="m in meters" :key="m.name" class="dmm" :style="{ left: m.x + 'px', top: m.y + 'px' }">
      <header>
        <h3>Multimeter-{{ m.name }}</h3>
        <button :aria-label="'Close ' + m.name"><svg width="11" height="11"><path d="M0 0l11 11M11 0L0 11" stroke="#888" /></svg></button>
      </header>
      <div class="readout"><output>{{ m.value }}</output></div>
      <div class="modes">
        <button v-for="k in modes" :key="k" :class="{ active: k === 'V' }">{{ k }}</button>
      </div>
      <div class="coupling">
        <button aria-label="AC"><svg width="24" height="10"><path d="M1 7l5-5h3l7 6h3l4-4" fill="none" stroke="#000" stroke-width="1.500" /></svg></button>
        <button class="active" aria-label="DC"><svg width="24" height="10"><path d="M1 4h22" stroke="#000" stroke-width="2" /></svg></button>
      </div>
      <button class="set">Set...</button>
      <div class="terminals">
        <span>+<i></i></span>
        <span class="neg">−<i></i></span>
      </div>
    </section>

    <footer class="taskbar">
      <div class="weather">
        <Icon name="haze" :size="26" />
        <div>27°C<br /><span>Haze</span></div>
      </div>
      <div class="apps">
        <button class="app" aria-label="Start"><Icon name="start" :size="23" /></button>
        <label class="search"><Icon name="search" /><input type="text" placeholder="Search" aria-label="Search" /></label>
        <button v-for="(a, i) in apps" :key="i" class="app" :class="{ running: a === 'app' }" :aria-label="a"><Icon :name="a" :size="a === 'resolve' ? 20 : 24" /></button>
      </div>
      <div class="tray">
        <Icon class="chev" name="chevron" /><Icon name="wifi" /><Icon name="volume" /><Icon name="battery" />
        <div class="clock">12:25 AM<br />4/10/2024</div>
        <Icon class="bell" name="bell" />
        <div class="pilot"><Icon name="copilot" :size="24" /><b>PRE</b></div>
      </div>
    </footer>
  </div>
</template>

<style>
body {
  margin: 0;
}
</style>

<style scoped>
.desktop {
  position: relative;
  display: flex;
  flex-direction: column;
  height: 100vh;
  overflow: hidden;
  background: #f0f0f0;
  color: #111;
  font: 14px/18px 'Noto Sans', 'Open Sans', sans-serif;
}
.desktop * {
  box-sizing: border-box;
}
button {
  font: inherit;
  color: inherit;
  background: none;
  border: 0;
  padding: 0;
}
h2,
h3 {
  margin: 0;
  font-size: 14px;
  font-weight: 400;
}
svg {
  display: block;
  flex: none;
}
.titlebar {
  display: flex;
  align-items: center;
  flex: none;
  height: 24px;
  padding-left: 2px;
  background: #eff3fb;
  border-bottom: 1px solid #999;
}
.title {
  margin-left: 5px;
}
.caption {
  display: flex;
  margin: 0 2px 2px auto;
}
.caption button {
  display: grid;
  place-items: center;
  width: 46px;
  height: 20px;
}
.menubar {
  display: flex;
  align-items: center;
  flex: none;
  height: 30px;
  padding: 0 3px 0 4px;
  gap: 13px;
  border-bottom: 1px solid #999;
}
.menubar > svg {
  margin-right: -5px;
}
.menubar > button:nth-of-type(2n) {
  margin-right: 1px;
}
.menubar u {
  text-underline-offset: 2px;
}
.mdi {
  display: flex;
  gap: 1px;
  margin: 10px 0 0 auto;
}
.bevel {
  display: grid;
  place-items: center;
  flex: none;
  width: 15px;
  height: 15px;
  border: 1px solid;
  border-color: #fff #777 #777 #fff;
  box-shadow: 1px 1px 0 #999;
}
.toolrow {
  display: flex;
  flex: none;
  height: 31px;
}
.toolrow + .toolrow {
  height: 32px;
}
.bar {
  display: flex;
  align-items: center;
  height: 31px;
  padding: 0 3px 0 11px;
  border: solid #999;
  border-width: 0 1px 1px 0;
}
.bar.view {
  margin-left: 47px;
  padding: 0 2px 0 9px;
  border-left: 1px solid #fff;
}
.bar.zoom {
  margin-left: 505px;
  padding-left: 10px;
  border-left: 1px solid #fff;
}
.bar.sim {
  width: 250px;
  margin-left: 105px;
  padding-left: 10px;
  border-left: 1px solid #fff;
}
.bar.probes {
  margin-left: 8px;
  padding-left: 9px;
  border-left: 1px solid #fff;
}
.tool {
  display: grid;
  place-items: center;
  width: 22px;
  height: 25px;
}
.tool.wide {
  width: 23px;
}
.tool.on {
  border: 1px solid;
  border-color: #888 #fff #fff #888;
  background: #f8f8f8;
}
.sep {
  width: 2px;
  height: 24px;
  margin: 0 3px;
  background: #999;
  border-right: 1px solid #fff;
}
.combo {
  position: relative;
  width: 146px;
  height: 25px;
  margin-left: 2px;
}
.combo select {
  appearance: none;
  width: 100%;
  height: 100%;
  padding: 0 4px;
  border: 1px solid #ccc;
  border-radius: 2px;
  background: #fff;
  color: #111;
  font: 13px 'Noto Sans', sans-serif;
}
.combo svg {
  position: absolute;
  right: 4px;
  top: 10px;
}
.drop {
  width: 7px;
  margin: 0 2px;
  border: 3px solid transparent;
  border-top: 4px solid #000;
  border-bottom: 0;
}
.interactive {
  display: flex;
  align-items: center;
  gap: 2px;
  margin: 0 0 2px 3px;
}
.work {
  display: flex;
  flex: 1;
  min-height: 0;
}
.toolbox {
  display: flex;
  flex-direction: column;
  flex: none;
  width: 209px;
  padding: 2px 9px 3px 3px;
  border-top: 1px solid #999;
}
.panelhead {
  display: flex;
  align-items: center;
  gap: 2px;
  padding-right: 1px;
}
.panelhead h2 {
  flex: 1;
  height: 25px;
  padding: 2px 3px;
  background: linear-gradient(90deg, #becbdb, #d6e4f2);
}
.box {
  display: flex;
  flex-direction: column;
  flex: 1;
  min-height: 0;
  margin-top: 2px;
  padding: 1px;
  border: 1px solid #aaa;
  border-width: 1px 3px 3px 1px;
  border-color: #bbb #8a8a8a #8a8a8a #bbb;
}
.boxtools {
  display: flex;
  align-items: center;
  gap: 11px;
  height: 26px;
  padding: 0 5px 0 4px;
}
.boxtools .far {
  margin-left: auto;
}
.tree {
  display: flex;
  flex-direction: column;
  flex: 1;
  min-height: 0;
  overflow: hidden;
  background: #fff;
  border: 1px solid #888;
}
.tree ul {
  flex: 1;
  margin: 0;
  padding: 2px 0 0 7px;
  list-style: none;
  white-space: nowrap;
}
.node,
.leaf {
  display: flex;
  align-items: center;
  height: 18px;
}
.node {
  gap: 6px;
}
.minus {
  flex: none;
  width: 9px;
  height: 9px;
  border: 1px solid #999;
  background: linear-gradient(#346, #346) center / 5px 1px no-repeat;
}
.leaf {
  gap: 5px;
  margin-left: 4px;
  padding-left: 30px;
  border-left: 1px dotted #888;
}
li:last-child .leaf {
  border-color: transparent;
}
.sel {
  background: #eee;
}
.hscroll {
  height: 17px;
  padding: 7px 0 0 18px;
  background: #f0f0f0;
}
.hscroll span {
  display: block;
  width: 70%;
  height: 2px;
  background: #858585;
}
.hscroll.wide {
  padding-left: 18px;
}
.hscroll.wide span {
  width: 96%;
}
.tabs {
  display: flex;
  flex: none;
}
.tabs.small {
  align-items: flex-start;
  height: 20px;
  font-size: 11px;
}
.tabs.small button {
  height: 18px;
  padding: 0 3px;
  border: 1px solid #777;
  border-width: 1px 2px 2px 1px;
  line-height: 15px;
}
.tabs.small .current {
  height: 21px;
  padding: 0 5px;
  border-width: 0 1px 2px 1px;
  line-height: 20px;
}
.doc {
  display: flex;
  flex-direction: column;
  flex: 1;
  min-width: 0;
}
.frame {
  display: flex;
  flex-direction: column;
  flex: 1;
  min-height: 0;
  padding: 3px 5px 6px 4px;
  border: 1px solid #777;
}
.sheetrow {
  display: flex;
  flex: 1;
  min-height: 0;
  border-top: 2px solid #777;
  border-left: 1px solid #777;
}
.edge {
  flex: none;
  width: 11px;
  background: linear-gradient(90deg, #666, #858585);
}
.sheet {
  flex: 1;
  min-width: 0;
  height: 100%;
  background: #fff;
}
.vscroll {
  flex: none;
  width: 19px;
  padding: 51px 0 0 9px;
  border-left: 2px solid #858585;
  border-right: 1px solid #e2e2e2;
}
.vscroll span {
  display: block;
  width: 2px;
  height: 354px;
  background: #858585;
}
.frame > .hscroll {
  border-left: 1px solid #777;
  border-bottom: 1px solid #ddd;
}
.heading {
  font: bold 34px 'Liberation Sans', sans-serif;
  fill: #0000c0;
}
.note {
  font: 22px 'Liberation Sans', sans-serif;
}
.label,
.net {
  font: bold 23px 'Liberation Sans', sans-serif;
}
.net {
  fill: #f00;
}
.meter {
  font: bold 23px 'Liberation Mono', monospace;
}
.ruler {
  font: 17px 'Liberation Sans', sans-serif;
  fill: #808080;
  text-anchor: middle;
}
.tabs.docs {
  height: 26px;
}
.docs > button:not(.cascade) {
  display: flex;
  align-items: center;
  gap: 3px;
  height: 25px;
  padding: 0 1px 0 5px;
  border: 1px solid #333;
  border-width: 0 2px 2px 1px;
}
.docs > .current:not(.cascade) {
  height: 26px;
  border-color: transparent #333 #fff transparent;
}
.cascade {
  margin: 6px 3px 0 auto;
}
.instruments {
  flex: none;
  width: 26px;
  border-bottom: 1px solid #999;
}
.rack {
  display: flex;
  flex-direction: column;
  align-items: center;
  height: 504px;
  padding-top: 11px;
  border: solid #999;
  border-width: 1px 1px 1px 0;
}
.list {
  display: flex;
  flex-direction: column;
  height: 378px;
}
.list button {
  flex: 1;
  min-height: 0;
}
.rack hr {
  flex: none;
  width: 22px;
  height: 1px;
  margin: 3px 0;
  border: 0;
  background: #999;
}
.single {
  height: 22px;
}
.tri {
  margin: 2px 0 4px;
}
.spread {
  display: flex;
  flex: none;
  height: 152px;
  padding: 6px 6px 0 1px;
  border-top: 1px solid #aaa;
}
.side {
  display: flex;
  flex-direction: column;
  align-items: center;
  width: 25px;
  gap: 1px;
}
.side .bevel {
  height: 16px;
}
.side h2 {
  width: 25px;
  height: 106px;
  overflow: hidden;
  display: flex;
  flex-direction: column;
  justify-content: flex-end;
  background: linear-gradient(#d6e4f2, #becbdb);
}
.side h2 span {
  writing-mode: vertical-rl;
  transform: rotate(180deg);
  line-height: 20px;
  white-space: nowrap;
  margin-bottom: 3px;
}
.sheetpane {
  flex: 1;
  min-width: 0;
  margin-left: 5px;
  margin-top: 5px;
}
.results {
  height: 110px;
  padding: 5px 24px;
  background: #fff;
  border: 1px solid #777;
  box-shadow: 2px 3px 0 -1px #f0f0f0, 3px 4px 0 -1px #777;
}
.sheetpane .tabs {
  margin-top: 4px;
}
.status {
  display: flex;
  flex: none;
  height: 23px;
  padding: 4px 5px 0 2px;
  border-top: 1px solid #999;
}
.cells {
  display: flex;
  gap: 2px;
  margin-left: auto;
  padding: 2px 0 3px 4px;
  border-left: 1px solid #ccc;
}
.cells i {
  width: 6px;
  border: 1px solid #aaa;
  border-right-color: #ddd;
  background: #e4e4e4;
}
.dmm {
  position: absolute;
  z-index: 2;
  display: flex;
  flex-direction: column;
  width: 273px;
  height: 300px;
  background: #f0f0f0;
  border-radius: 8px 8px 0 0;
  box-shadow: 0 0 0 1px #aaa, 0 0 18px rgb(0 0 0 / 35%);
}
.dmm header {
  display: flex;
  align-items: center;
  justify-content: space-between;
  height: 29px;
  padding: 0 9px 0 8px;
  border-radius: 8px 8px 0 0;
  background: #f3f3f3;
  color: #909090;
}
.readout {
  height: 32px;
  padding: 2px;
  border: 2px solid;
  border-color: #e4e4e4 #777 #666 #fff;
  background: #fff;
}
.readout output {
  display: grid;
  place-items: center;
  height: 25px;
  border: 1px solid #777;
  background: #000;
  color: #fff;
  font: 16px/22px 'Liberation Sans', sans-serif;
}
.modes {
  display: flex;
  align-items: center;
  gap: 9px;
  flex: none;
  width: 261px;
  height: 28px;
  margin: 9px 0 0 6px;
  padding: 0 12px 0 11px;
  border: 1px solid #dcdcdc;
}
.modes button,
.coupling button,
.set {
  display: grid;
  place-items: center;
  height: 20px;
  border: 1px solid #ccc;
  border-radius: 4px;
  background: #fdfdfd;
  font-size: 11px;
  line-height: 16px;
}
.modes button {
  flex: 1;
}
.modes .active,
.coupling .active {
  border-color: #005499;
  background: #cce4f7;
}
.coupling {
  display: flex;
  align-items: center;
  gap: 12px;
  width: 145px;
  height: 26px;
  margin-left: 63px;
  padding: 0 9px;
  border: 1px solid #dcdcdc;
  border-top: 0;
}
.coupling button {
  flex: 1;
  height: 14px;
}
.set {
  width: 164px;
  height: 17px;
  margin: 11px 0 0 55px;
  font-size: 12px;
  line-height: 14px;
}
.terminals {
  display: flex;
  justify-content: space-between;
  margin: 53px 8px 0 7px;
}
.terminals span {
  display: flex;
  flex-direction: column;
  align-items: center;
  width: 13px;
  line-height: 18px;
  font-size: 14px;
}
.terminals .neg {
  margin-top: 3px;
}
.terminals i {
  width: 13px;
  height: 13px;
  border: 4px solid #c4c4c4;
  border-radius: 50%;
  background: #fff;
}
.taskbar {
  display: flex;
  flex: none;
  justify-content: space-between;
  height: 48px;
  color: #fff;
  font-size: 12px;
  line-height: 16px;
  background: linear-gradient(90deg, #060d20 0, #0a1430 15%, #1b46cc 19%, #0a1a8c 34%, #1b46cc 48%, #0a1a7c 63%, #020814 77%, #050f22 92%, #071128 100%);
}
.weather,
.apps,
.tray {
  position: relative;
  z-index: 3;
  display: flex;
  align-items: center;
}
.weather {
  gap: 6px;
  width: 540px;
  padding: 0 0 2px 18px;
}
.weather span {
  color: #ccc;
}
.apps {
  flex: 1;
}
.app {
  position: relative;
  display: grid;
  place-items: center;
  width: 44px;
  height: 48px;
}
.running::after {
  content: '';
  position: absolute;
  bottom: 5px;
  width: 16px;
  height: 3px;
  border-radius: 2px;
  background: #4cc2ff;
}
.search {
  display: flex;
  align-items: center;
  width: 221px;
  height: 32px;
  margin-left: 3px;
  padding-left: 11px;
  gap: 10px;
  border: 1px solid #f4f4f4;
  border-radius: 16px;
  background: rgb(255 255 255 / 15%);
}
.search + .app {
  margin-left: 1px;
}
.search input {
  width: 150px;
  padding: 0;
  border: 0;
  background: none;
  font: 15px 'Noto Sans', sans-serif;
}
.search input::placeholder {
  color: #fff;
  opacity: 1;
}
.tray {
  gap: 8px;
  padding-right: 20px;
}
.tray .chev {
  margin-right: 8px;
}
.clock {
  width: 64px;
  margin-right: 4px;
  text-align: right;
}
.bell {
  margin: 0 8px 0 0;
}
.pilot {
  position: relative;
}
.pilot b {
  position: absolute;
  right: 0;
  bottom: 0;
  padding: 0 2px;
  border-radius: 2px;
  background: #fdc81e;
  color: #111;
  font-size: 7px;
  line-height: 7px;
}
</style>
